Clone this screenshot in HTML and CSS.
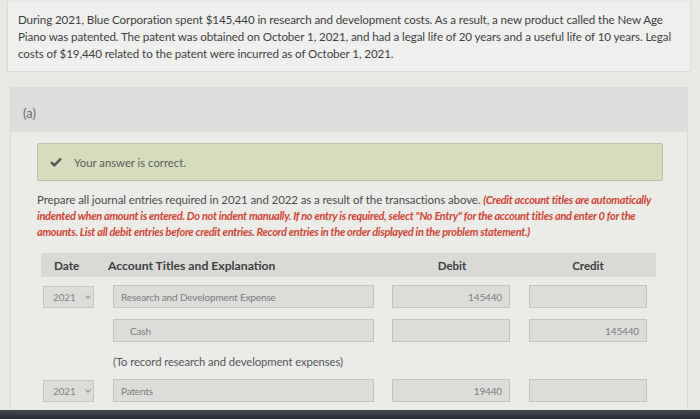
FILE: index.html
```html
<!DOCTYPE html>
<html>
<head>
<meta charset="utf-8">
<link rel="stylesheet" href="styles.css">
</head>
<body>
<div class="page">
  <div class="problem">
    <p>During 2021, Blue Corporation spent $145,440 in research and development costs. As a result, a new product called the New Age Piano was patented. The patent was obtained on October 1, 2021, and had a legal life of 20 years and a useful life of 10 years. Legal costs of $19,440 related to the patent were incurred as of October 1, 2021.</p>
  </div>
  <div class="part">
    <div class="part-head">(a)</div>
    <div class="part-body">
      <div class="correct">
        <svg class="check" width="12" height="10" viewBox="0 0 12 10"><path d="M1 5.2 L4.3 8.4 L11 1.6" fill="none" stroke="#555" stroke-width="2.4" stroke-linejoin="round"/></svg>
        <span>Your answer is correct.</span>
      </div>
      <p class="instr">Prepare all journal entries required in 2021 and 2022 as a result of the transactions above. <em>(Credit account titles are automatically indented when amount is entered. Do not indent manually. If no entry is required, select "No Entry" for the account titles and enter 0 for the amounts. List all debit entries before credit entries. Record entries in the order displayed in the problem statement.)</em></p>
      <div class="table">
        <div class="thead">
          <div class="c-date">Date</div>
          <div class="c-acct">Account Titles and Explanation</div>
          <div class="c-debit">Debit</div>
          <div class="c-credit">Credit</div>
        </div>
        <div class="row">
          <div class="c-date"><div class="sel">2021<span class="chev"></span></div></div>
          <div class="c-acct"><div class="inp">Research and Development Expense</div></div>
          <div class="c-debit"><div class="inp num">145440</div></div>
          <div class="c-credit"><div class="inp num"></div></div>
        </div>
        <div class="row">
          <div class="c-date"></div>
          <div class="c-acct"><div class="inp indent">Cash</div></div>
          <div class="c-debit"><div class="inp num"></div></div>
          <div class="c-credit"><div class="inp num">145440</div></div>
        </div>
        <div class="row expl">
          <div class="c-date"></div>
          <div class="c-acct">(To record research and development expenses)</div>
        </div>
        <div class="row">
          <div class="c-date"><div class="sel">2021<span class="chev"></span></div></div>
          <div class="c-acct"><div class="inp">Patents</div></div>
          <div class="c-debit"><div class="inp num">19440</div></div>
          <div class="c-credit"><div class="inp num"></div></div>
        </div>
      </div>
    </div>
  </div>
</div>
<div class="bezel"></div>
</body>
</html>
```
FILE: styles.css
```css
html, body {
  margin: 0;
  padding: 0;
  height: 419px;
  overflow: hidden;
}
body {
  background: #e8e9e5;
  font-family: Lato, "Open Sans", sans-serif;
  color: #3e3f40;
  position: relative;
}
.page {
  padding: 1px 10px 0 7px;
}
.problem {
  background: #efefed;
  border: 1px solid #dadad6;
  border-top: none;
  padding: 10px 10px 9px 10px;
  width: 662px;
}
.problem p {
  margin: 0;
  font-size: 11.6px;
  line-height: 17px;
  letter-spacing: -0.1px;
}
.part {
  margin: 15px 0 0 3px;
  width: 676px;
  background: #ebebe8;
  border-left: 1px solid #dcdcd8;
  border-right: 1px solid #dcdcd8;
  height: 340px;
}
.part-head {
  background: #dddedb;
  height: 45px;
  box-sizing: border-box;
  padding: 18px 0 0 12px;
  font-size: 13px;
  color: #6a6c70;
}
.part-body {
  padding: 11px 22px 0 26px;
}
.correct {
  display: flex;
  align-items: center;
  height: 36px;
  background: #d5ddbd;
  border: 1px solid #b9c2a4;
  border-radius: 2px;
  padding-left: 12px;
  width: 612px;
  font-size: 11.3px;
  color: #5a5d58;
}
.check {
  margin-right: 12px;
}
.instr {
  margin: 11px 0 0 0;
  font-size: 11.5px;
  line-height: 16px;
  letter-spacing: -0.1px;
  color: #4a4b4c;
  width: 630px;
}
.instr em {
  color: #d14434;
  font-weight: bold;
  font-style: italic;
  font-size: 11px;
  line-height: 16px;
  letter-spacing: -0.3px;
}
.table {
  margin-top: 13px;
  margin-left: 4px;
}
.thead {
  display: flex;
  align-items: center;
  background: #d9d9d6;
  height: 24px;
  width: 615px;
  font-weight: bold;
  font-size: 12.2px;
  color: #3d3e40;
}
.thead .c-date { padding-left: 13px; width: 54px; box-sizing: border-box; font-size: 11.8px; }
.thead .c-acct { width: 280px; padding-left: 13px; }
.thead .c-debit { width: 118px; text-align: center; margin-left: 5px; font-size: 11.5px; }
.thead .c-credit { width: 118px; text-align: center; margin-left: 18px; font-size: 11.5px; }
.row {
  display: flex;
  align-items: center;
  margin-top: 8px;
  height: 23px;
}
.row + .row { margin-top: 11px; }
.row .c-date { width: 72px; flex: none; padding-left: 2px; box-sizing: border-box; }
.row .c-acct { width: 261px; flex: none; }
.row .c-debit { width: 118px; flex: none; margin-left: 18px; }
.row .c-credit { width: 118px; flex: none; margin-left: 19px; }
.sel {
  width: 51px;
  height: 22px;
  box-sizing: border-box;
  background: #dcdcd9;
  border: 1px solid #c6c6c2;
  font-size: 9.8px;
  color: #808184;
  display: flex;
  align-items: center;
  padding-left: 9px;
}
.chev {
  width: 3px;
  height: 3px;
  border-right: 1.3px solid #8a8b8e;
  border-bottom: 1.3px solid #8a8b8e;
  transform: rotate(45deg);
  margin: -2px 0 0 10px;
}
.inp {
  height: 23px;
  box-sizing: border-box;
  background: #dcdcd9;
  border: 1px solid #c3c3bf;
  font-size: 10px;
  color: #7b7c80;
  display: flex;
  align-items: center;
  padding: 0 7px;
  letter-spacing: -0.15px;
}
.inp.indent { padding-left: 16px; }
.inp.num { justify-content: flex-end; }
.row.expl { height: 16px; }
.row + .row.expl { margin-top: 11px; }
.row.expl .c-acct {
  width: 300px;
  font-size: 11.3px;
  color: #55575a;
  letter-spacing: -0.1px;
}
.row.expl + .row { margin-top: 10px; }
.bezel {
  position: absolute;
  left: 0;
  right: 0;
  bottom: 0;
  height: 9px;
  background: linear-gradient(#454a52, #262a30);
}
```
